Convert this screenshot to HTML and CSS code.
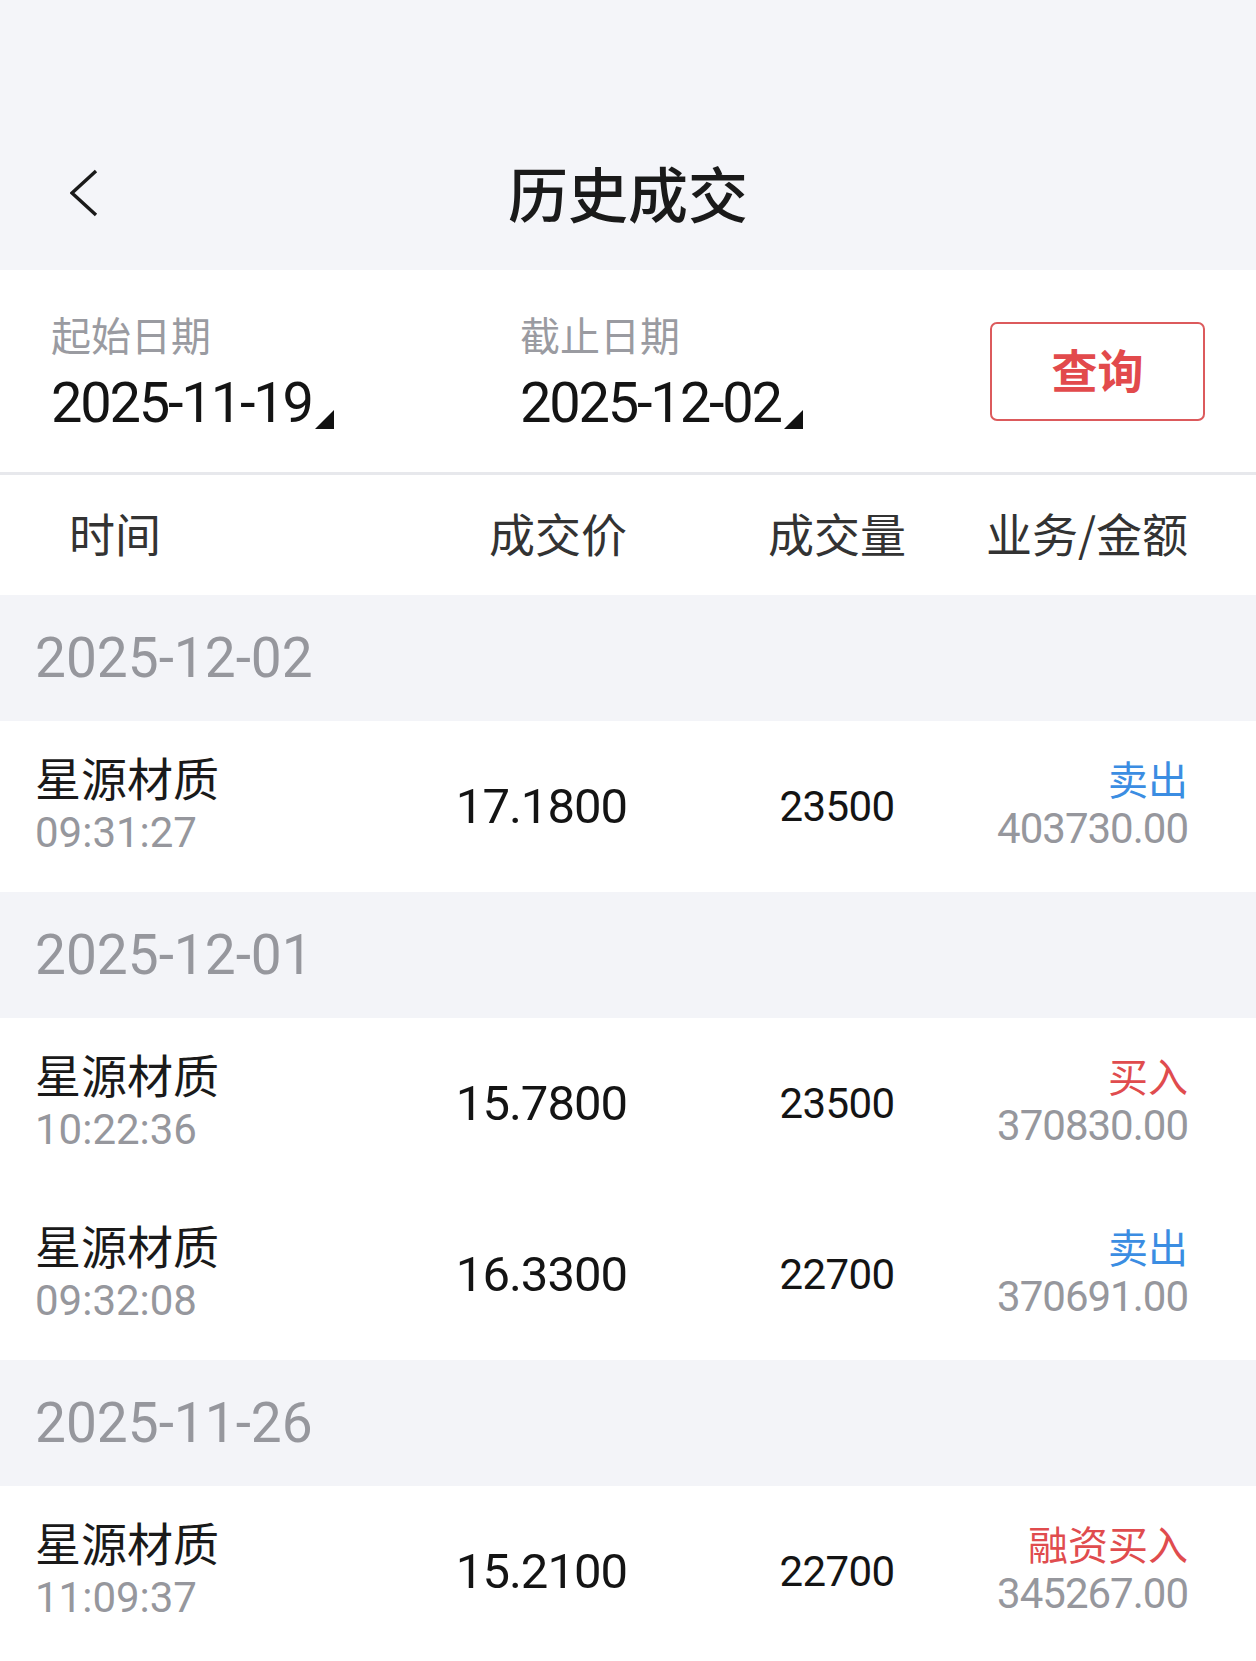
FILE: index.html
```html
<!DOCTYPE html>
<html lang="zh-CN">
<head>
    <meta charset="UTF-8">
    <meta name="viewport" content="width=device-width, initial-scale=1.0">
    <title>历史成交</title>
    <link rel="stylesheet" href="styles.css">
</head>
<body>
    <!-- barra superior -->
    <header class="topbar">
        <div class="topbar-inner">
            <a class="back" href="#">
                <svg width="30" height="50" viewBox="0 0 30 50">
                    <polyline points="26,2 2,24 26,46" fill="none" stroke="#1a1a1a" stroke-width="3.4" stroke-linejoin="miter"/>
                </svg>
            </a>
            <h1 class="title">历史成交</h1>
            <span></span>
        </div>
    </header>

    <!-- filtro de fechas -->
    <section class="filter">
        <div class="date-field">
            <div class="date-label">起始日期</div>
            <div class="date-value">2025-11-19<svg class="corner" width="19" height="19" viewBox="0 0 19 19"><polygon points="19,0 19,19 0,19" fill="#111"/></svg></div>
        </div>
        <div class="date-field">
            <div class="date-label">截止日期</div>
            <div class="date-value">2025-12-02<svg class="corner" width="19" height="19" viewBox="0 0 19 19"><polygon points="19,0 19,19 0,19" fill="#111"/></svg></div>
        </div>
        <button class="query-btn">查询</button>
    </section>

    <div class="table-head grid">
        <div class="c1 head-first">时间</div>
        <div class="c2">成交价</div>
        <div class="c3">成交量</div>
        <div class="c4">业务/金额</div>
    </div>

    <div class="group">2025-12-02</div>
    <div class="trade grid">
        <div class="c1 stock">
            <div class="name">星源材质</div>
            <div class="time">09:31:27</div>
        </div>
        <div class="c2 price">17.1800</div>
        <div class="c3 qty">23500</div>
        <div class="c4 deal">
            <div class="kind sell">卖出</div>
            <div class="amount">403730.00</div>
        </div>
    </div>

    <div class="group">2025-12-01</div>
    <div class="trade grid">
        <div class="c1 stock">
            <div class="name">星源材质</div>
            <div class="time">10:22:36</div>
        </div>
        <div class="c2 price">15.7800</div>
        <div class="c3 qty">23500</div>
        <div class="c4 deal">
            <div class="kind buy">买入</div>
            <div class="amount">370830.00</div>
        </div>
    </div>
    <div class="trade grid">
        <div class="c1 stock">
            <div class="name">星源材质</div>
            <div class="time">09:32:08</div>
        </div>
        <div class="c2 price">16.3300</div>
        <div class="c3 qty">22700</div>
        <div class="c4 deal">
            <div class="kind sell">卖出</div>
            <div class="amount">370691.00</div>
        </div>
    </div>

    <div class="group">2025-11-26</div>
    <div class="trade grid">
        <div class="c1 stock">
            <div class="name">星源材质</div>
            <div class="time">11:09:37</div>
        </div>
        <div class="c2 price">15.2100</div>
        <div class="c3 qty">22700</div>
        <div class="c4 deal">
            <div class="kind buy">融资买入</div>
            <div class="amount">345267.00</div>
        </div>
    </div>
</body>
</html>
```

FILE: styles.css
```css
body {
    margin: 0;
    background: #fff;
    font-family: Roboto, "Noto Sans CJK SC", sans-serif;
    color: #1c1c1e;
}

/* barra superior */
.topbar {
    background: #f4f5f9;
    height: 270px;
    padding-top: 120px;
    box-sizing: border-box;
}
.topbar-inner {
    display: grid;
    grid-template-columns: 1fr auto 1fr;
    align-items: center;
    height: 144px;
}
.back {
    display: flex;
    padding-left: 70px;
    padding-top: 4px;
}
.title {
    margin: 0;
    font-family: "Noto Sans CJK SC", sans-serif;
    font-size: 60px;
    font-weight: 500;
    color: #1a1a1a;
    line-height: 1;
}

/* filtro */
.filter {
    display: flex;
    align-items: center;
    height: 202px;
    padding: 0 51px;
    border-bottom: 3px solid #e7e8ec;
}
.date-field {
    width: 469px;
    padding-top: 4px;
}
.date-label {
    font-family: "Noto Sans CJK SC", sans-serif;
    font-size: 40px;
    line-height: 50px;
    margin-bottom: 10px;
    color: #9a9ba1;
}
.date-value {
    font-size: 56px;
    letter-spacing: -2.2px;
    line-height: 68px;
    color: #141414;
}
.corner {
    vertical-align: -7px;
    margin-left: 3px;
}
.query-btn {
    margin-left: auto;
    width: 215px;
    height: 99px;
    background: #fff;
    border: 2.5px solid #dc5a5c;
    border-radius: 7px;
    color: #e24a4c;
    font-family: "Noto Sans CJK SC", sans-serif;
    font-size: 46px;
    font-weight: 700;
    padding: 0 0 7px;
}

/* tabla */
.grid {
    display: grid;
    grid-template-columns: 365px 290px 294px 204px;
    align-items: center;
    padding: 0 68px 0 35px;
}
.c2 {
    text-align: right;
    padding-right: 63px;
}
.c3 {
    text-align: center;
}
.c4 {
    text-align: right;
    white-space: nowrap;
}
.table-head {
    height: 120px;
    padding-bottom: 6px;
    box-sizing: border-box;
    font-family: "Noto Sans CJK SC", sans-serif;
    font-size: 46px;
    color: #333;
}
.head-first {
    padding-left: 34px;
}
.group {
    background: #f3f4f8;
    height: 126px;
    display: flex;
    align-items: center;
    padding-left: 35px;
    font-size: 55px;
    color: #96979d;
}
.trade {
    height: 171px;
    background: #fff;
}
.stock {
    padding-bottom: 7px;
}
.name {
    font-family: "Noto Sans CJK SC", sans-serif;
    font-size: 46px;
    line-height: 54px;
    margin-bottom: 6px;
    color: #1a1a1a;
}
.time {
    font-size: 42px;
    line-height: 48px;
    color: #96979d;
}
.price {
    font-size: 49px;
    letter-spacing: -1px;
    color: #141414;
}
.qty {
    font-size: 42px;
    letter-spacing: -0.6px;
    color: #141414;
}
.deal {
    padding-bottom: 7px;
}
.kind {
    font-family: "Noto Sans CJK SC", sans-serif;
    font-size: 40px;
    line-height: 48px;
    margin-bottom: 3px;
}
.sell {
    color: #3b8de2;
}
.buy {
    color: #e04c4e;
}
.amount {
    font-size: 42px;
    letter-spacing: -1px;
    line-height: 48px;
    color: #96979d;
}
```
